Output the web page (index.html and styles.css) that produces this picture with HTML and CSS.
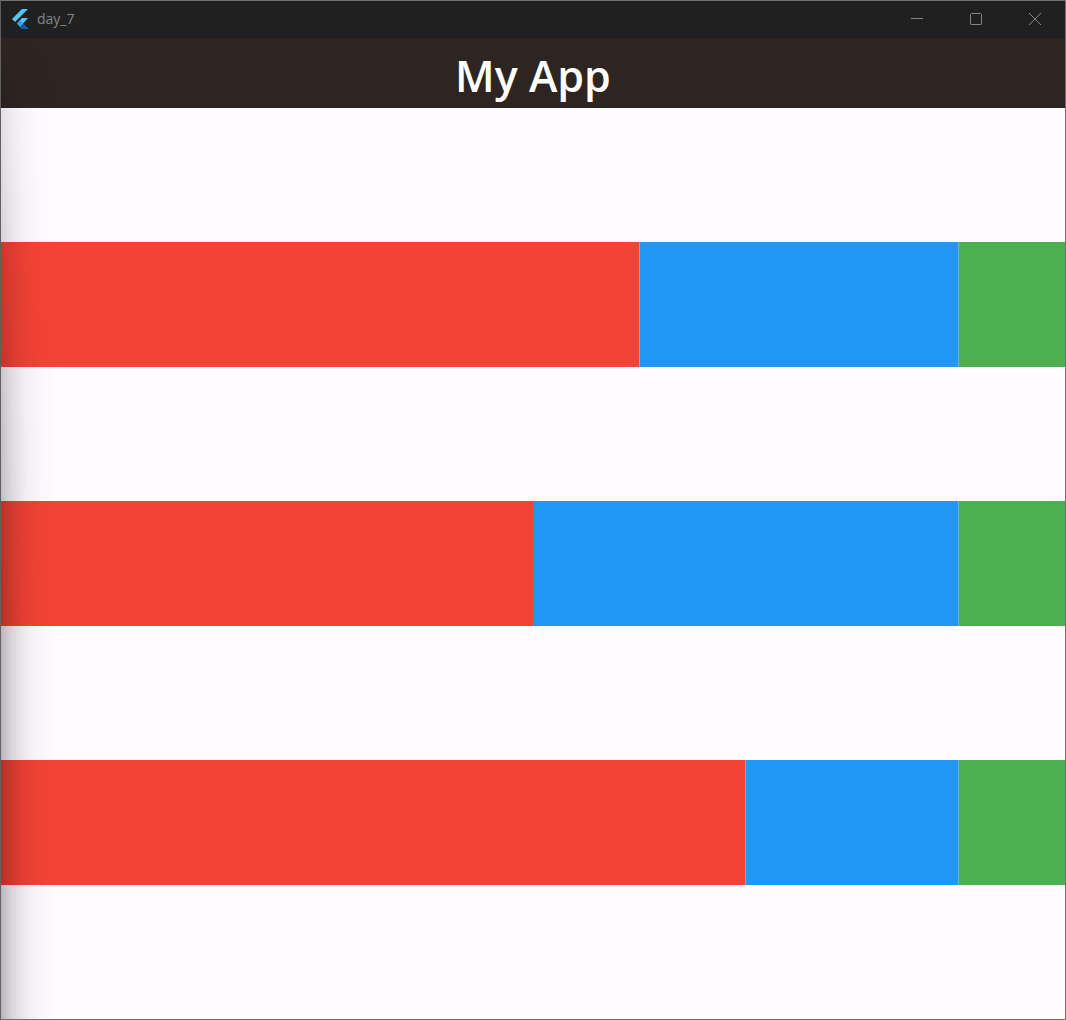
FILE: index.html
```html
<!DOCTYPE html>
<html lang="en">
<head>
<meta charset="utf-8">
<title>day_7</title>
<link rel="stylesheet" href="styles.css">
</head>
<body>
<div class="window">
  <div class="titlebar">
    <svg class="logo" viewBox="0 0 16 20" aria-hidden="true">
      <defs>
        <linearGradient id="fold" x1="0" y1="0" x2="1" y2="1">
          <stop offset="0" stop-color="#0b4f9c"/>
          <stop offset="1" stop-color="#0b62b4"/>
        </linearGradient>
      </defs>
      <path d="M10 0H16L3 13L0 10Z" fill="#54c5f8"/>
      <path d="M10 9H16L11 14.500L16 20H10L5 14.500Z" fill="#54c5f8"/>
      <path d="M8 17.500L11 14.500L16 20H10Z" fill="url(#fold)"/>
      <path d="M5 14.500L8 11.500L11 14.500L8 17.500Z" fill="#29a6ee"/>
    </svg>
    <span class="caption">day_7</span>
    <div class="controls">
      <button class="control" type="button" aria-label="Minimize">
        <svg viewBox="0 0 14 14"><path d="M1 6.500H13"/></svg>
      </button>
      <button class="control" type="button" aria-label="Maximize">
        <svg viewBox="0 0 14 14"><rect x="1.500" y="1.500" width="11" height="11" rx="1"/></svg>
      </button>
      <button class="control" type="button" aria-label="Close">
        <svg viewBox="0 0 14 14"><path d="M1 1L13 13M13 1L1 13"/></svg>
      </button>
    </div>
  </div>
  <header class="appbar"><h1 class="title">My App</h1></header>
  <main class="rows">
    <div class="row">
      <div class="cell red flex-6"></div>
      <div class="cell blue flex-3 seam-inner"></div>
      <div class="cell green flex-1 seam"></div>
    </div>
    <div class="row">
      <div class="cell red flex-5"></div>
      <div class="cell blue flex-4"></div>
      <div class="cell green flex-1 seam"></div>
    </div>
    <div class="row">
      <div class="cell red flex-7"></div>
      <div class="cell blue flex-2 seam"></div>
      <div class="cell green flex-1 seam"></div>
    </div>
  </main>
  <div class="shade"></div>
</div>
</body>
</html>
```
FILE: styles.css
```css
* { box-sizing: border-box; }

body { margin: 0; }

.window {
  position: relative;
  display: flex;
  flex-direction: column;
  min-height: 100vh;
  border: 1px solid #707070;
  border-left-color: #606060;
  background: #fffbff;
  font-family: "Open Sans", "Noto Sans", sans-serif;
}

.titlebar {
  display: flex;
  align-items: center;
  height: 37px;
  padding: 0 1px 1px 11px;
  background: #202020;
  color: #858585;
}

.logo {
  width: 16px;
  height: 20px;
}

.caption {
  margin-left: 9px;
  font-size: 14px;
  line-height: 20px;
}

.controls {
  display: flex;
  height: 100%;
  margin-left: auto;
}

.control {
  display: flex;
  align-items: center;
  justify-content: center;
  width: 59px;
  padding: 0;
  border: 0;
  background: transparent;
}

.control svg {
  width: 14px;
  height: 14px;
  fill: none;
  stroke: #858585;
}

.appbar {
  height: 70px;
  padding-top: 8px;
  background: #2e2523;
}

.title {
  margin: 0;
  color: #fff;
  font-size: 43px;
  font-weight: 600;
  line-height: 60px;
  text-align: center;
}

.rows {
  display: flex;
  flex: 1;
  flex-direction: column;
  justify-content: space-evenly;
}

.row {
  display: flex;
  height: 125px;
}

.cell { flex-basis: 0; }
.red { background: #f44336; }
.blue { background: #2196f3; }
.green { background: #4caf50; }

.flex-1 { flex-grow: 1; }
.flex-2 { flex-grow: 2; }
.flex-3 { flex-grow: 3; }
.flex-4 { flex-grow: 4; }
.flex-5 { flex-grow: 5; }
.flex-6 { flex-grow: 6; }
.flex-7 { flex-grow: 7; }

/* Pale hairline where two cells meet */
.seam { box-shadow: -1px 0 #79b0c8; }
.seam-inner { box-shadow: inset 1px 0 #64b0f0; }

/* Soft shadow along the left edge, growing stronger downwards */
.shade {
  position: absolute;
  inset: 37px auto 0 0;
  width: 56px;
  background: linear-gradient(to right, rgba(0, 0, 0, 0.27), rgba(0, 0, 0, 0.15) 20%, rgba(0, 0, 0, 0.06) 45%, rgba(0, 0, 0, 0.02) 72%, transparent);
  mask-image: linear-gradient(to bottom, transparent, rgba(0, 0, 0, 0.4) 70px, rgba(0, 0, 0, 0.8) 350px, #000 600px);
  pointer-events: none;
}
```
